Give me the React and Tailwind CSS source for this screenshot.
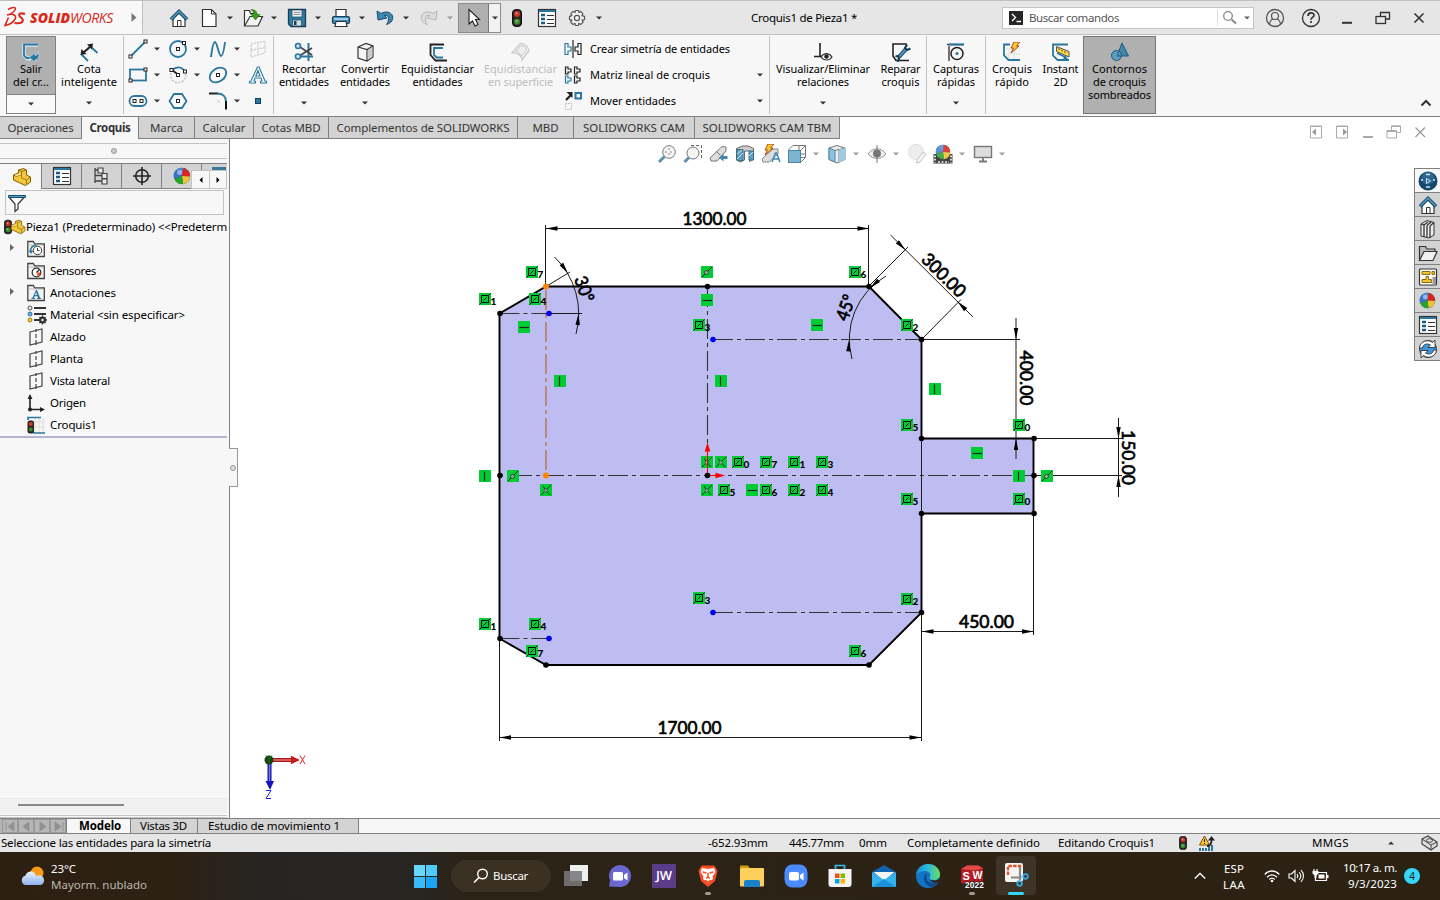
import { useLayoutEffect, useRef } from "react";

const FONT = "font-['Noto_Sans','Open_Sans',sans-serif]";

/* Text set to a given width by spreading its letters. */
function Fit({ w, className = "", children }) {
  const ref = useRef(null);
  useLayoutEffect(() => {
    const el = ref.current;
    el.style.letterSpacing = "0px";
    const n = el.textContent.length;
    el.style.letterSpacing = (w - el.getBoundingClientRect().width) / n + "px";
  }, [w]);
  return (
    <span ref={ref} className={"inline-block whitespace-nowrap " + className}>
      {children}
    </span>
  );
}

function Svg({ w = 20, h = 20, className = "", children }) {
  return (
    <svg width={w} height={h} viewBox={`0 0 ${w} ${h}`} fill="none" className={"block shrink-0 " + className}>
      {children}
    </svg>
  );
}

const Caret = ({ c = "#333", className = "" }) => (
  <Svg w={6} h={4} className={className}>
    <path d="M0 .5h6L3 3.500z" fill={c} />
  </Svg>
);

const B = "#2b77a0";
const D = "#333";

/* ---------- shared icons ---------- */
const Home = () => (
  <Svg>
    <path d="M4 10v8.500h12V10L10 4z" fill="#fff" stroke={D} strokeWidth="1.200" />
    <path d="M8.500 18.500v-6h3.500v6" stroke={D} />
    <path d="M2 11.500L10 3.500l8 8" stroke="#163f58" strokeWidth="3.600" />
    <path d="M2 11.300L10 3.300l8 8" stroke="#4795bd" strokeWidth="1.700" />
  </Svg>
);
const Ball = ({ s = 18 }) => (
  <svg width={s} height={s} viewBox="0 0 18 18" className="block shrink-0">
    <circle cx="9" cy="9" r="8.200" fill="#444" />
    <path d="M9 9L3 3A8 8 0 0 1 11 1.200z" fill="#4b86d8" />
    <path d="M9 9L3 3A8 8 0 0 0 1.500 12z" fill="#3674c9" />
    <path d="M9 9l1-7.800A8 8 0 0 1 17 9.500z" fill="#dc2420" />
    <path d="M9 9l8 .5A8 8 0 0 1 10 17z" fill="#f0c334" />
    <path d="M9 9l1 8A8 8 0 0 1 1.500 12z" fill="#23a52b" />
    <circle cx="6.500" cy="5.500" r="2.500" fill="#fff" opacity=".45" />
  </svg>
);
const Traffic = ({ w = 10, h = 18 }) => (
  <svg width={w} height={h} viewBox="0 0 10 18" className="block shrink-0">
    <rect x=".5" y=".5" width="9" height="17" rx="3.500" fill="#2c2525" stroke="#111" />
    <circle cx="5" cy="5" r="3" fill="#c93a26" />
    <circle cx="4.500" cy="4.300" r="1" fill="#f2937f" />
    <circle cx="5" cy="12.700" r="3" fill="#3f8d2b" />
    <circle cx="4.500" cy="12" r="1" fill="#8ed07c" />
  </svg>
);
const ListIcon = () => (
  <Svg>
    <rect x="1.500" y="1.500" width="17" height="17" fill="#fff" stroke={D} strokeWidth="1.200" />
    <path d="M2 3h16" stroke={B} strokeWidth="2" />
    <path d="M4 7h4M4 11h4M4 15h4" stroke="#1c5b80" strokeWidth="2.600" />
    <path d="M10 7.500h7M10 11.500h7M10 15.500h7" stroke={D} strokeWidth="1" />
  </Svg>
);
const Folder = () => (
  <Svg>
    <path d="M1.500 17.500V3.500h6l1.500 2.500h8v3" fill="#bbb" stroke={D} strokeWidth="1.200" />
    <path d="M1.500 17.500L6 8.500h13l-4 9z" fill="#f1f1f1" stroke={D} strokeWidth="1.200" />
  </Svg>
);
const Bolt = ({ t }) => <path transform={t} d="M4 0h6L6.500 4H9L1 11l2.500-5H1z" fill="#ffc92e" stroke="#a8491d" />;

/* ---------- title bar ---------- */
const NewDoc = () => (
  <Svg>
    <path d="M3.500 1.500h9l4.500 4.500v12.500H3.500z" fill="#fff" stroke={D} strokeWidth="1.200" />
    <path d="M12.500 1.500V6H17" stroke={D} />
  </Svg>
);
const OpenDoc = () => (
  <Svg w={22}>
    <path d="M2.500 18V2.500h5l1 3h6V9" fill="#fff" stroke={D} strokeWidth="1.200" />
    <path d="M2.500 18L8 8.500h12.500L16 18z" fill="#f4f4f4" stroke={D} strokeWidth="1.200" />
    <path d="M9 1.500c4 0 6 2 6 5h3L13.500 12 9 6.500h3c0-2-1-3.500-3-5z" fill="#3d9e1c" stroke="#1e6b09" strokeWidth=".6" />
  </Svg>
);
const Save = () => (
  <Svg>
    <path d="M1.500 1.500h17v17H4l-2.500-2.500z" fill="#2f7ca6" stroke="#173f58" strokeWidth="1.300" />
    <rect x="5" y="2" width="10" height="7" fill="#f3f3f3" stroke="#173f58" strokeWidth=".7" />
    <path d="M6.500 4.500h7M6.500 6.500h7" stroke="#777" strokeWidth=".8" />
    <rect x="5.500" y="12" width="9" height="6" fill="#ddd" stroke="#173f58" strokeWidth=".7" />
    <path d="M7 13h2.500v4H7z" fill="#173f58" />
  </Svg>
);
const Print = () => (
  <Svg>
    <path d="M5 10V1.500h10V10" fill="#fff" stroke={D} strokeWidth="1.200" />
    <rect x="1.500" y="8.500" width="17" height="7" rx="1.500" fill="#3c8cb6" stroke="#173f58" strokeWidth="1.200" />
    <path d="M3 11h14" stroke="#bfe2f3" strokeWidth="1.500" />
    <path d="M5 13.500h10l1 5H4z" fill="#fff" stroke={D} strokeWidth="1.200" />
  </Svg>
);
const Undo = ({ c = "#3d88b0", o = "#1b4b68", flip }) => (
  <Svg className={flip ? "-scale-x-100" : ""}>
    <path d="M2 3l1 9 9-2-3-2.500c3-.8 5 1 4.500 4.500-.2 1.800-1 3-2 4.500 5-1.500 7-5 6-8.500C16 3.500 10 3 6 5.500z" fill={c} stroke={o} />
  </Svg>
);
const Cursor = () => (
  <Svg>
    <path d="M5 1.500v14.500l3.500-3 2.500 5 3-1.500-2.500-5h4z" fill="#fff" stroke="#222" strokeWidth="1.100" />
  </Svg>
);
const Gear = () => (
  <Svg w={18} h={18}>
    <path d="M7.400 1.500h3.200l.4 2.100 1.600-1.200L15 4.800l-1.200 1.900 2.700.7v3.200l-2.500.5 1.200 2-2.400 2.300-2-1.200-.5 2.300H7.400L7 14.300l-2 1.200-2.300-2.400 1.200-2-2.400-.5V7.400l2.500-.7L2.800 4.800l2.300-2.400L7 3.600z" fill="#f2f2f2" stroke="#555" strokeWidth="1.200" strokeLinejoin="round" />
    <circle cx="9" cy="9" r="2.600" stroke="#555" strokeWidth="1.200" />
  </Svg>
);

function Tool({ children, c }) {
  return (
    <div className="flex w-11 items-center">
      <div className="flex w-[26px] justify-center">{children}</div>
      <Caret c={c} className="ml-[5px]" />
    </div>
  );
}

function TitleBar() {
  return (
    <header className="flex h-[35px] w-full shrink-0 items-center border-b border-t-[1.5px] border-[#c0c0c0] bg-[#e6e6e6]">
      <div className="flex h-full w-[143px] items-center border-r border-[#c0c0c0] bg-[#f8f8f8]">
        <Svg w={22} h={24} className="ml-1">
          <path d="M4 3.500C8 1 13 .500 11 4 10 6 7.500 7.500 5.500 8.500" stroke="#da291c" strokeWidth="1.500" />
          <path d="M3 9c7-2 10.500 1 7.500 5-2 3-5.500 4.800-9.500 5.500L4.500 11.500" stroke="#da291c" strokeWidth="1.600" />
          <path d="M21 8c-3.500-1.300-7-.5-5.500 2 1 1.500 4.500 3 3 5.500-1.300 2.200-4.500 2-8 1.500" stroke="#da291c" strokeWidth="2.100" />
        </Svg>
        <div className="ml-1 flex font-['Open_Sans','Noto_Sans',sans-serif] text-[14px] italic leading-[18px] text-[#da291c]">
          <Fit w={40} className="font-extrabold">SOLID</Fit>
          <Fit w={43}>WORKS</Fit>
        </div>
        <Svg w={6} h={10} className="ml-[18px]">
          <path d="M.5 0v9L5.500 4.500z" fill="#777" />
        </Svg>
      </div>
      <div className="ml-6 flex w-[29px] items-center"><div className="ml-[2px]"><Home /></div></div>
      <Tool><NewDoc /></Tool>
      <Tool><OpenDoc /></Tool>
      <Tool><Save /></Tool>
      <Tool><Print /></Tool>
      <Tool><Undo /></Tool>
      <Tool c="#999"><Undo flip c="#ddd" o="#b5b5b5" /></Tool>
      <div className="-ml-[2px] flex h-[30px] w-[43px] border border-[#8c8c8c] bg-[#f2f2f2]">
        <div className="flex w-[30px] items-center justify-center border-r border-[#777] bg-[#b0b0b0]"><Cursor /></div>
        <div className="flex flex-1 items-center justify-center"><Caret /></div>
      </div>
      <div className="ml-[11px]"><Traffic /></div>
      <div className="ml-[15px]"><ListIcon /></div>
      <div className="ml-[11px]"><Gear /></div>
      <Caret className="ml-[10px]" />
      <div className="ml-[149px] w-[251px] text-[11.500px]"><Fit w={106}>Croquis1 de Pieza1 *</Fit></div>
      <div className="flex h-[22px] w-[252px] items-center border border-[#c4c4c4] bg-white">
        <Svg w={14} h={14} className="ml-[6px]">
          <rect width="14" height="14" fill="#262626" />
          <path d="M3 3l3.500 3.500L3 10M7.500 10.500H12" stroke="#fff" strokeWidth="1.400" />
        </Svg>
        <span className="ml-[6px] w-[189px] border-r border-[#e0e0e0] text-[11.500px] text-[#555]"><Fit w={90}>Buscar comandos</Fit></span>
        <Svg w={15} h={15} className="ml-1">
          <circle cx="6" cy="6" r="4.300" stroke="#888" strokeWidth="1.300" />
          <path d="M9.500 9.500l4.500 4" stroke="#888" strokeWidth="2" />
        </Svg>
        <Caret c="#666" className="ml-[7px]" />
      </div>
      <Svg className="ml-[11px]">
        <circle cx="10" cy="10" r="8.500" stroke="#555" strokeWidth="1.300" />
        <circle cx="10" cy="8" r="3.500" stroke="#555" strokeWidth="1.200" />
        <path d="M4.500 16c.5-3 2-4.500 3.500-5M15.500 16c-.5-3-2-4.500-3.500-5" stroke="#555" strokeWidth="1.200" />
      </Svg>
      <Svg className="ml-4">
        <circle cx="10" cy="10" r="8.500" stroke="#333" strokeWidth="1.300" />
        <path d="M7 8c0-4 6-4 6-.8 0 2.200-3 2.200-3 4.500M10 13v2" stroke="#333" strokeWidth="1.700" />
      </Svg>
      <Svg w={12} h={14} className="ml-5"><path d="M1 11.800h10" stroke="#333" strokeWidth="2" /></Svg>
      <Svg w={16} h={14} className="ml-[22px]">
        <path d="M5.500 5V1.500h9V8H10.500M5.500 1.500h9" stroke="#333" strokeWidth="1.300" />
        <rect x="1" y="5.500" width="9.500" height="7" stroke="#333" strokeWidth="1.300" />
      </Svg>
      <Svg w={12} h={12} className="ml-[22px]"><path d="M1.500 1.500l9 9M10.500 1.500l-9 9" stroke="#333" strokeWidth="1.600" /></Svg>
    </header>
  );
}

/* ---------- ribbon ---------- */
const Nd = ({ x, y }) => <rect x={x - 1.500} y={y - 1.500} width="3" height="3" fill="#fff" stroke="#222" />;

const ExitSketch = () => (
  <Svg>
    <path d="M17 3H3v10l3 3.500h4" stroke="#d8ecf5" strokeWidth="3.500" />
    <path d="M17 2.500H3v11l2.500 2.500H9" stroke={B} strokeWidth="1.800" />
    <path d="M8 15.500l6-4.500v2.500c2 0 3-1.500 3-4 2 4.500 0 8.500-3 8.500V20z" fill={B} stroke="#d8ecf5" strokeWidth=".5" />
  </Svg>
);
const SmartDim = () => (
  <Svg>
    <path d="M2 12l7 7M11 4l7.500 7" stroke={B} strokeWidth="1.800" />
    <path d="M4 11L12 4" stroke="#222" strokeWidth="2.200" />
    <path d="M1.500 13l1-6 5 5zM14 1.500l-6 1 5 5z" fill="#222" />
  </Svg>
);
const Line = () => (
  <Svg><path d="M2 18L18 2" stroke={B} strokeWidth="1.800" /><Nd x={2.500} y={17.500} /><Nd x={17.500} y={2.500} /></Svg>
);
const Circle = () => (
  <Svg><circle cx="10" cy="10" r="8" stroke={B} strokeWidth="1.800" /><Nd x={10} y={10} /><Nd x={16} y={4} /></Svg>
);
const Spline = () => (
  <Svg><path d="M3 18C4 10 5 3 7 3s4 14 6 14 3-6 4-14" stroke={B} strokeWidth="1.900" /></Svg>
);
const Planes = () => (
  <Svg><path d="M3 5l14-3v12L3 18zM10 3.500v13M3 11.500l14-3" stroke="#c2c2c2" strokeDasharray="2 1" /></Svg>
);
const Rect = () => (
  <Svg><rect x="2" y="4.500" width="16" height="11" stroke={B} strokeWidth="1.800" /><Nd x={2.500} y={15.500} /><Nd x={17.500} y={4.500} /></Svg>
);
const Arc = () => (
  <Svg>
    <path d="M3 8a7.500 7.500 0 1 0 14-1" stroke="#c4c4c4" strokeWidth="1.600" strokeDasharray="2 1.500" />
    <path d="M5 4.500c4-3 8-2.500 11 .5" stroke={B} strokeWidth="1.800" />
    <path d="M4 5l6 4.500" stroke="#222" strokeWidth="1.800" />
    <Nd x={3.500} y={5} /><Nd x={10} y={10} /><Nd x={17} y={6.500} />
  </Svg>
);
const Ellipse = () => (
  <Svg><ellipse cx="10" cy="10" rx="9" ry="6.500" transform="rotate(-35 10 10)" stroke={B} strokeWidth="1.800" /><Nd x={10} y={10} /></Svg>
);
const TextA = () => (
  <Svg><path d="M1.500 18v-1.500l1.500-.5L9.500 2h1.500l6 14 1.500.5V18h-6v-1.500l1.500-.5-1-3H7l-1 3 1.500.5V18zM7.800 11h4.200l-2-5.500z" fill="#fff" stroke={B} strokeWidth="1.100" /></Svg>
);
const Slot = () => (
  <Svg><rect x="1.500" y="5" width="17" height="10" rx="5" stroke={B} strokeWidth="1.800" /><Nd x={6.500} y={10} /><Nd x={13.500} y={10} /></Svg>
);
const Hex = () => (
  <Svg><path d="M6 3h8l4.500 7L14 17H6l-4.500-7z" stroke={B} strokeWidth="1.800" /><Nd x={10} y={10} /></Svg>
);
const Fillet = () => (
  <Svg>
    <path d="M1 2.500h9" stroke="#222" strokeWidth="2" />
    <path d="M9 2.500c6 0 9 3 9 8" stroke={B} strokeWidth="1.800" />
    <path d="M18 10v8.500" stroke="#111" strokeWidth="2" />
    <path d="M9 9l3 3M12 9l-3 3" stroke="#ccc" />
  </Svg>
);
const Point = () => (
  <Svg><rect x="7.500" y="7.500" width="5" height="5" fill={B} stroke="#173f58" /></Svg>
);
const Trim = () => (
  <Svg>
    <path d="M14.500 1v18M2 14.500h17" stroke={B} strokeWidth="2" />
    <path d="M6 5l12 8M6 13.500L18 6" stroke="#444" strokeWidth="1.600" />
    <circle cx="4" cy="4" r="2.500" fill="#cde4f0" stroke={B} strokeWidth="1.600" />
    <circle cx="4" cy="14.500" r="2.500" fill="#cde4f0" stroke={B} strokeWidth="1.600" />
  </Svg>
);
const Cube = () => (
  <Svg>
    <path d="M3 5l8-3.500L18 4v11l-6 4-9-3z" fill="#f5f5f5" stroke={D} strokeWidth="1.200" />
    <path d="M3 5l9 2.500L18 4M12 7.500V19" stroke={D} strokeWidth="1.200" />
    <path d="M12.800 8L17.300 5v9.700l-4.500 3z" fill="#ccc" />
  </Svg>
);
const Offset = () => (
  <Svg>
    <path d="M16 2.500H2.500V13l5 5.500H19" stroke="#222" strokeWidth="1.800" />
    <path d="M15 6H6v7l2.500 2.500H15" stroke={B} strokeWidth="1.800" />
  </Svg>
);
const OffsetSurf = () => (
  <Svg>
    <path d="M1 11L9 1.500c4-.5 8 3 9 7L11 18c0-4-5-8-10-7z" fill="#eee" stroke="#ccc" strokeWidth="1.300" />
    <path d="M5 9l5-5.500c2.500 0 5 2.500 5.500 5L10 14c-.5-2-2.500-4.500-5-5z" stroke="#c8c8c8" />
  </Svg>
);
const Mirror = () => (
  <Svg w={18}>
    <path d="M1 4.500h3v3.500h3v4H4v3.500H1z" stroke={B} strokeWidth="1.200" />
    <path d="M9 1v18" stroke="#222" strokeWidth="1.200" />
    <path d="M17 4.500h-3v3.500h-3v4h3v3.500h3z" stroke="#222" strokeWidth="1.200" />
  </Svg>
);
const Pattern = () => {
  const p = "h2.500v2h3v3h-3v2H";
  return (
    <Svg w={18}>
      <path d={`M1.500 2${p}1.500zM10.500 2${p}10.500zM10.500 11${p}10.500z`} stroke="#222" strokeWidth="1.200" />
      <path d={`M1.500 11${p}1.500z`} stroke={B} strokeWidth="1.200" />
    </Svg>
  );
};
const Move = () => (
  <Svg w={18}>
    <path d="M2 9L7 4" stroke="#222" strokeWidth="2.300" /><path d="M8.500 1v6l-6-6z" fill="#222" />
    <rect x="11.500" y="2" width="5.500" height="5.500" stroke={B} strokeWidth="2" />
    <path d="M1.500 12.500h6v6h-6z" stroke="#bbb" strokeDasharray="1.500 1" />
  </Svg>
);
const Relations = () => (
  <Svg>
    <path d="M7 1v13M1 14.500h10" stroke="#222" strokeWidth="1.600" />
    <path d="M8 15c3-4.500 8-4.500 11 0-3 4-8 4-11 0z" fill="#fff" stroke="#333" strokeWidth="1.200" /><circle cx="13.500" cy="14.500" r="2.200" fill="#222" />
  </Svg>
);
const Repair = () => (
  <Svg>
    <path d="M16 2H2v12l3 4.500h13" stroke="#222" strokeWidth="1.600" />
    <path d="M8 15l7-8" stroke="#163f58" strokeWidth="4" /><path d="M8 15l7-8" stroke="#4b97bd" strokeWidth="2" />
    <path d="M16 2.500l-2 3.500 2 2 3.500-1.500M4.500 14l3 .5.500 3-2 2" stroke="#163f58" strokeWidth="2.200" />
  </Svg>
);
const Snap = () => (
  <Svg>
    <path d="M3 19V4M1 2.500h17" stroke="#444" strokeWidth="1.500" /><path d="M3 2.500h15" stroke={B} strokeWidth="2" />
    <circle cx="11" cy="11.500" r="6" stroke="#222" strokeWidth="1.500" /><circle cx="11" cy="11.500" r="1.600" fill={B} />
  </Svg>
);
const Quick = () => (
  <Svg>
    <path d="M7 7v11M12 7v11M4 12h14M4 7h14" stroke="#ddd" />
    <path d="M8 2.500H2v11L6.500 18H18" stroke={B} strokeWidth="1.800" />
    <Bolt t="translate(8 0)" />
  </Svg>
);
const Instant2D = () => (
  <Svg>
    <path d="M17 2.500H2v11L6.500 18H18" stroke={B} strokeWidth="1.800" />
    <path d="M5.500 4.500L18 9.500v5.500L5.500 9.500z" fill="#ffd93b" stroke="#555" /><path d="M8 6v2M11 7.500v2M14 9v2" stroke="#555" />
    <path d="M6 11l9 4.500" stroke={B} strokeWidth="1.600" /><path d="M17 17l-5 .3 2-4z" fill={B} />
  </Svg>
);
const Shaded = () => (
  <Svg>
    <path d="M12 1l6.500 13H7z" fill="#4388ab" stroke="#1d5876" />
    <circle cx="6.500" cy="13.500" r="5" fill="#5b9dbe" stroke="#1d5876" /><path d="M7 14h4.500M8 10v4" stroke="#1d5876" />
  </Svg>
);

function Big({ className, icon, lines, dis, arrow }) {
  return (
    <div className={"flex h-[78px] shrink-0 flex-col items-center pt-[6px] " + className}>
      {icon}
      <div className={"text-center text-[11px] leading-[13px] " + (dis ? "text-[#bdbdbd]" : "text-black")}>
        {lines.map(([t, w]) => (
          <div key={t} className="flex h-[13px] justify-center"><Fit w={w}>{t}</Fit></div>
        ))}
      </div>
      {arrow && <Caret className="mb-[9px] mt-auto" />}
    </div>
  );
}
const Sep = () => <div className="h-[78px] w-px shrink-0 bg-[#c4c4c4]" />;

const TOOLS = [
  [Line, 1], [Circle, 1], [Spline, 1], [Planes, 0],
  [Rect, 1], [Arc, 1], [Ellipse, 1], [TextA, 0],
  [Slot, 1], [Hex, 0], [Fillet, 1], [Point, 0],
];

function Ribbon() {
  return (
    <section className="flex h-[82px] w-full shrink-0 border-b border-[#808080] bg-[#f7f7f7] pt-px">
      <div className="ml-[6px] flex h-[78px] w-[50px] flex-col border border-[#808080] bg-[#f9f9f9]">
        <div className="flex h-[58px] flex-col items-center border-b border-[#808080] bg-[#b0b0b0] pt-[5px] text-[11px] leading-[13px]">
          <ExitSketch />
          <Fit w={22}>Salir</Fit>
          <Fit w={36}>del cr...</Fit>
        </div>
        <div className="flex flex-1 items-center justify-center"><Caret /></div>
      </div>
      <Big className="w-[66px]" icon={<SmartDim />} lines={[["Cota", 24], ["inteligente", 56]]} arrow />
      <div className="w-px" />
      <Sep />
      <div className="ml-1 grid h-[78px] w-[145px] grid-cols-[40px_40px_40px_25px] grid-rows-[26px_26px_26px]">
        {TOOLS.map(([I, a], i) => (
          <div key={i} className="flex items-center"><I />{a ? <Caret className="ml-[6px]" /> : null}</div>
        ))}
      </div>
      <Sep />
      <Big className="w-[60px]" icon={<Trim />} lines={[["Recortar", 44], ["entidades", 50]]} arrow />
      <Big className="w-[62px]" icon={<Cube />} lines={[["Convertir", 48], ["entidades", 50]]} arrow />
      <Big className="w-[83px]" icon={<Offset />} lines={[["Equidistanciar", 73], ["entidades", 50]]} />
      <Big className="w-[83px]" icon={<OffsetSurf />} lines={[["Equidistanciar", 73], ["en superficie", 65]]} dis />
      <div className="ml-[2px] grid h-[78px] w-[205px] grid-rows-[26px_26px_26px] text-[11px]">
        <div className="flex items-center"><Mirror /><Fit w={140} className="ml-2">Crear simetría de entidades</Fit></div>
        <div className="flex items-center"><Pattern /><Fit w={120} className="ml-2">Matriz lineal de croquis</Fit><Caret className="ml-auto mr-[6px]" /></div>
        <div className="flex items-center"><Move /><Fit w={86} className="ml-2">Mover entidades</Fit><Caret className="ml-auto mr-[6px]" /></div>
      </div>
      <Sep />
      <Big className="w-[106px]" icon={<Relations />} lines={[["Visualizar/Eliminar", 94], ["relaciones", 52]]} arrow />
      <Big className="w-[49px]" icon={<Repair />} lines={[["Reparar", 40], ["croquis", 38]]} />
      <div className="w-px" />
      <Sep />
      <Big className="w-[58px]" icon={<Snap />} lines={[["Capturas", 46], ["rápidas", 38]]} arrow />
      <Sep />
      <Big className="w-[52px]" icon={<Quick />} lines={[["Croquis", 40], ["rápido", 34]]} />
      <Big className="w-[45px]" icon={<Instant2D />} lines={[["Instant", 36], ["2D", 14]]} />
      <Big className="w-[73px] border border-[#777] bg-[#b0b0b0] !pt-[5px]" icon={<Shaded />} lines={[["Contornos", 55], ["de croquis", 53], ["sombreados", 63]]} />
      <div className="flex flex-1 items-end justify-end">
        <Svg w={12} h={8} className="mb-[9px] mr-2"><path d="M1.500 6.500L6 2l4.500 4.500" stroke="#333" strokeWidth="2" /></Svg>
      </div>
    </section>
  );
}

/* ---------- command tabs ---------- */
const TABS = [
  ["Operaciones", "w-[82px]", 66], ["Croquis", "w-[57px]", 41], ["Marca", "w-[56px]", 33], ["Calcular", "w-[59px]", 43],
  ["Cotas MBD", "w-[75px]", 59], ["Complementos de SOLIDWORKS", "w-[189px]", 173], ["MBD", "w-[56px]", 26],
  ["SOLIDWORKS CAM", "w-[121px]", 102], ["SOLIDWORKS CAM TBM", "w-[145px]", 129],
];
const WinBtn = ({ children }) => <div className="flex w-[26px] justify-center">{children}</div>;
function CommandTabs() {
  return (
    <nav className="flex h-[22px] w-full shrink-0 bg-white text-[11.500px] text-[#333]">
      {TABS.map(([t, c, w]) => (
        <div key={t} className={"flex shrink-0 items-center justify-center border-r border-[#808080] " + c + (t === "Croquis" ? " bg-[#f7f7f7] font-bold" : " border-b bg-[#d3d3d3]")}>
          <Fit w={w}>{t}</Fit>
        </div>
      ))}
      <div className="flex flex-1 items-center justify-end pr-[7px] pt-2">
        <WinBtn><Svg w={12} h={14}><path d="M.5 1h11v12H.5zM.5 1.500h11" stroke="#aaa" /><path d="M6 3.500v7L2 7z" fill="#999" /></Svg></WinBtn>
        <WinBtn><Svg w={12} h={14}><path d="M.5 1h11v12H.5zM.5 1.500h11" stroke="#aaa" /><path d="M7 3.500v7L11 7z" fill="#999" /></Svg></WinBtn>
        <WinBtn><Svg w={10} h={14}><path d="M0 12h10" stroke="#aaa" strokeWidth="2" /></Svg></WinBtn>
        <WinBtn><Svg w={16} h={14}><path d="M5.500 5V.8h9V7.500h-4M5.500 1.500h9M1 5.500h9.500v7.500H1zM1 6.500h9" stroke="#aaa" /></Svg></WinBtn>
        <WinBtn><Svg w={11} h={11}><path d="M.5.5l9.500 9.500M10 .5L.5 10" stroke="#999" strokeWidth="1.200" /></Svg></WinBtn>
      </div>
    </nav>
  );
}

/* ---------- feature tree ---------- */
const Part = ({ s = 20 }) => (
  <svg width={s} height={s} viewBox="1 0 19 20" fill="none" className="block shrink-0">
    <path d="M2 8l5-2V3l5-1.500 3 1.500v5l4 2v5l-5 3.500L2 13z" fill="#f4c838" stroke="#7d5d0d" />
    <path d="M2 8l3 1.500 5-2M7 3l3 1.500 5-1.500M10 4.500V11l5 2 4-3M15 13v5" stroke="#9b7615" />
    <path d="M3 8l5-1.500 2 1-5 1.500z" fill="#ffe894" />
  </svg>
);
const Config = () => (
  <Svg><path d="M3 2v15M3 4h4M3 15h7M3 9.500h7" stroke="#444" strokeWidth="1.300" /><path d="M6 2h5v5H6zM10 7.500h5v5h-5zM10 13h5v5h-5z" fill="#e8e8e8" stroke="#444" strokeWidth="1.200" /></Svg>
);
const Target = () => (
  <Svg><circle cx="10" cy="10" r="6.300" stroke="#222" strokeWidth="1.600" /><path d="M10 1v18M1 10h18" stroke="#222" strokeWidth="1.600" /></Svg>
);
const FolderBase = ({ children }) => (
  <Svg w={18} h={18}>
    <path d="M.8 16.500V1.500h5.500l1.500 2.500h9.500v12.500z" fill="#f3f3f3" stroke="#444" strokeWidth="1.300" />
    <path d="M1.500 5h15" stroke="#bbb" />
    {children}
  </Svg>
);
const Historial = () => (
  <FolderBase><circle cx="10.500" cy="10.500" r="4.200" fill="#fff" stroke="#444" /><path d="M10.500 8v2.500h2" stroke="#333" /><path d="M3.500 11c0-4 3-5.500 6-5.500" stroke={B} strokeWidth="1.700" /><path d="M1.500 10.500h5L4 14z" fill={B} /></FolderBase>
);
const Sensor = () => (
  <FolderBase><circle cx="9.500" cy="10.500" r="4.300" fill="#fff" stroke="#333" strokeWidth="1.300" /><path d="M9.500 10.500l3-3" stroke="#222" strokeWidth="1.300" /><path d="M9.500 10.500h4a4 4 0 0 1-2.500 4z" fill="#e5502c" /></FolderBase>
);
const Annot = () => (
  <FolderBase><path d="M4.500 15v-1l1-.3L9 6h1l3 7.700 1 .3v1h-4v-1l1-.3-.5-1.500H7.500L7 13.700l1 .3v1z" fill={B} /><path d="M8 11h2l-1-2.500z" fill="#fff" /></FolderBase>
);
const Material = () => (
  <Svg>
    <path d="M7 3h12M7 9h12M7 15h6" stroke="#333" strokeWidth="1.800" />
    <circle cx="3" cy="3" r="2" fill="#eee" stroke="#555" /><circle cx="3" cy="9" r="2" fill="#6cb5dc" stroke={B} /><circle cx="3" cy="15" r="2" fill="#f8c93a" stroke="#a77d10" />
    <circle cx="15.500" cy="15" r="3.500" fill="#333" /><path d="M15.500 10.500v9M11 15h9M12.500 12l6 6M18.500 12l-6 6" stroke="#333" strokeWidth="1.300" /><circle cx="15.500" cy="15" r="1.200" fill="#f7f7f7" />
  </Svg>
);
const Plane = () => (
  <Svg w={18} h={18}><path d="M3 4l12-3v13L3 17zM9 1v3M9 6v4M9 12v5" stroke="#444" strokeWidth="1.200" /></Svg>
);
const Origin = () => (
  <Svg w={18} h={18}><path d="M3 3v12.500h12" stroke="#222" strokeWidth="1.600" /><path d="M3 0l2.500 5h-5zM18 15.500l-5 2.500v-5z" fill="#222" /><circle cx="3" cy="15.500" r="2" fill="#222" /></Svg>
);
const SketchIcon = () => (
  <Svg w={18} h={18}><path d="M8 2v15M12 2v15M16 2v15M5 6h13M5 11h13" stroke="#ddd" /><path d="M1 4V1.500h13M6 17h12" stroke={B} strokeWidth="1.700" /><rect x=".5" y="4.500" width="6.500" height="13" rx="2.500" fill="#2b2424" /><circle cx="3.800" cy="8" r="2" fill="#cd3c2a" /><circle cx="3.800" cy="13.500" r="2" fill="#3c8c2b" /></Svg>
);
const TREE = [
  ["Historial", Historial, 44, 1], ["Sensores", Sensor, 46, 0], ["Anotaciones", Annot, 66, 1],
  ["Material <sin especificar>", Material, 135, 0], ["Alzado", Plane, 36, 0], ["Planta", Plane, 33, 0],
  ["Vista lateral", Plane, 60, 0], ["Origen", Origin, 36, 0], ["Croquis1", SketchIcon, 47, 0],
];
const PTAB = "flex h-full w-10 shrink-0 items-center justify-center border-r border-[#808080]";

function FeaturePanel() {
  return (
    <aside className="flex h-full w-[230px] shrink-0 flex-col border-r border-[#808080] bg-[#f7f7f7]">
      <div className="mt-1 flex h-4 w-[227px] items-center justify-center border-y border-[#c4c4c4]">
        <div className="h-[6px] w-[6px] rounded-full border border-[#999] bg-[#ccc]" />
      </div>
      <div className="mt-1 flex h-[26px] w-[227px] overflow-hidden border-t border-[#808080] pl-[2px]">
        <div className={PTAB + " bg-[#f7f7f7]"}><Part /></div>
        <div className={PTAB + " border-b bg-[#d3d3d3]"}><ListIcon /></div>
        <div className={PTAB + " border-b bg-[#d3d3d3]"}><Config /></div>
        <div className={PTAB + " border-b bg-[#d3d3d3]"}><Target /></div>
        <div className="flex h-full w-[29px] shrink-0 items-center overflow-hidden border-b border-[#808080] bg-[#d3d3d3] pl-[11px]"><Ball /></div>
        <div className="flex w-9 shrink-0 flex-col">
          <div className="flex h-[6px] bg-[#d3d3d3] pt-[3px]"><div className="-mt-[3px] ml-[10px] h-[6px] w-px bg-[#808080]" /><div className="ml-[10px] h-[3px] w-[14px] bg-[#3c7797]" /></div>
          <div className="flex flex-1 border border-[#c4c4c4] bg-[#f7f7f7]">
            <div className="flex w-[18px] items-center justify-center border-r border-[#c4c4c4]"><Svg w={4} h={6}><path d="M3.500 0v6L.5 3z" fill="#000" /></Svg></div>
            <div className="flex flex-1 items-center justify-center"><Svg w={4} h={6}><path d="M.5 0v6l3-3z" fill="#000" /></Svg></div>
          </div>
        </div>
      </div>
      <div className="ml-[5px] mt-px flex h-[25px] w-[219px] shrink-0 items-center border border-[#c4c4c4]">
        <Svg className="ml-[1px]"><path d="M2 4l6 7v7.500l3-2.500v-5l6.500-7" fill="#fff" stroke={D} strokeWidth="1.200" /><path d="M1.500 2.500h17v2h-17z" fill="#4ca5cf" stroke="#1b4b68" /></Svg>
      </div>
      <div className="mt-[1px] flex h-[22px] w-[227px] shrink-0 items-center overflow-hidden pl-1 text-[11.500px]">
        <Traffic w={8} h={16} /><div className="-ml-[2px] w-[17px]"><Part s={16} /></div>
        <Fit w={201}>{"Pieza1 (Predeterminado) <<Predeterm"}</Fit>
      </div>
      {TREE.map(([t, I, w, a]) => (
        <div key={t} className="flex h-[22px] shrink-0 items-center text-[11.500px]">
          <div className="w-[27px] pl-[10px]">{a ? <Svg w={5} h={8} className="-mt-[2px]"><path d="M0 0v7l4-3.500z" fill="#666" /></Svg> : null}</div>
          <div className="w-[23px]"><I /></div>
          <Fit w={w}>{t}</Fit>
        </div>
      ))}
      <div className="h-[2px] w-[227px] shrink-0 bg-[#b4b4cf]" />
      <div className="mt-auto flex h-[17px] w-[227px] items-center border-t border-white bg-[#f0f0f0]"><div className="ml-[18px] h-[2px] w-[106px] bg-[#888]" /></div>
      <div className="mt-[2px] h-[3px] w-[227px] border-y border-[#c4c4c4]" />
    </aside>
  );
}

/* ---------- sketch ---------- */
const REL = [
  [532, 272, 7], [485, 299, 1], [535, 299, 4], [855, 272, 6], [907, 325, 2], [699, 325, 3], [907, 425, 5], [1019, 425, 0],
  [738, 462, 0], [766, 462, 7], [794, 462, 1], [822, 462, 3], [724, 490, 5], [766, 490, 6], [794, 490, 2], [822, 490, 4],
  [907, 499, 5], [1019, 499, 0], [907, 599, 2], [699, 598, 3], [485, 624, 1], [535, 624, 4], [532, 651, 7], [855, 651, 6],
];
const HOR = [[707, 300], [524, 327], [817, 325], [752, 490], [977, 453]];
const VER = [[560, 381], [721, 381], [935, 389], [485, 476], [1019, 476]];
const MID = [[707, 272], [513, 476], [1047, 476]];
const COI = [[707, 462], [721, 462], [546, 490], [707, 490]];
const DOTS = [
  [500, 313.500], [707.500, 286.500], [869, 286.500], [921.500, 339.500], [500, 475.500], [707.500, 475.500], [921.500, 438.500],
  [1034, 438.500], [1034, 475.500], [921.500, 513.500], [1034, 513.500], [921.500, 612.500], [869, 665], [546, 665], [500, 638.500],
];
const BLUE = [[549, 313.500], [713, 339.500], [713, 612.500], [549, 638.500]];

const Badge = ({ x, y, children }) => (
  <g transform={`translate(${x - 6} ${y - 6})`}>
    <rect width="12" height="12" fill="#00cc33" />
    {children}
  </g>
);
/* Arrow head with its tip at x,y, pointing along a degrees. */
const Tip = ({ x, y, a }) => <path transform={`translate(${x} ${y}) rotate(${a})`} d="M0 0L-11.500 2.200V-2.200z" fill="#000" />;
const Dim = ({ x, y, a = 0, w, children }) => (
  <text transform={`translate(${x} ${y}) rotate(${a})`} y="6.500" textAnchor="middle" textLength={w} lengthAdjust="spacingAndGlyphs" fontSize="18" fill="#000" stroke="#000" strokeWidth=".7" className="font-['Lato',sans-serif]">
    {children}
  </text>
);

function Sketch() {
  return (
    <svg width="1210" height="648" viewBox="230 169 1210 648" fill="none" className="block">
      <path d="M546 286.500H869L921.500 339.500V438.500H1033.500V513.500H921.500V612.500L869 665H546L499.500 638.500V313.500z" fill="#bdbdf1" />
      <g stroke="#333" strokeWidth="1.100" strokeDasharray="20 4 4 4">
        <path d="M499.500 313.500H549M499.500 638.500H549M713 339.500H921M713 612.500H921M512 475.500H1033M707.500 287V475" />
        <path d="M546 290V475" stroke="#b9723d" strokeWidth="1.300" />
      </g>
      <g stroke="#1a1a1a" strokeWidth="1">
        <path d="M545.500 225V286M868.500 225V286M546 228.500H869" />
        <path d="M546 286.500L570 272M549 313.500H582" />
        <path d="M554.500 257A78.500 78.500 0 0 1 576 334" />
        <path d="M886 276A73 73 0 0 0 852 359" />
        <path d="M869 286L908 247M922 339L961 299.500M890.500 235L973 317" />
        <path d="M922 339.500H1020M1016 318V459M1034 438.500H1122M1034 475.500H1122M1118.500 418V497" />
        <path d="M1033.500 514V635M921.500 613V741M922 631.500H1033M499.500 639V741M499.500 737.500H921" />
        <path d="M921.500 438V513" />
      </g>
      <path d="M921.500 438.500V339.500L869 286.500H546L499.500 313.500V638.500L546 665H869L921.500 612.500V513.500H1033.500V438.500H921.500" stroke="#000" strokeWidth="1.900" />
      <Tip x={546} y={228.500} a={180} /><Tip x={869} y={228.500} a={0} />
      <Tip x={568} y={273.500} a={55} /><Tip x={578.500} y={313.500} a={-86} />
      <Tip x={870} y={288} a={138} /><Tip x={849} y={340} a={-87} />
      <Tip x={905.500} y={250} a={45} /><Tip x={957.500} y={301.500} a={225} />
      <Tip x={1016} y={339.500} a={90} /><Tip x={1016} y={438.500} a={-90} />
      <Tip x={1118.500} y={438.500} a={90} /><Tip x={1118.500} y={475.500} a={-90} />
      <Tip x={922} y={631.500} a={180} /><Tip x={1033.500} y={631.500} a={0} />
      <Tip x={499.500} y={737.500} a={180} /><Tip x={921} y={737.500} a={0} />
      <Dim x={714.500} y={218} w={64}>1300.00</Dim>
      <Dim x={689.500} y={727} w={64}>1700.00</Dim>
      <Dim x={986.500} y={621} w={55}>450.00</Dim>
      <Dim x={944} y={275} a={45} w={54}>300.00</Dim>
      <Dim x={1026} y={378} a={90} w={55}>400.00</Dim>
      <Dim x={1128} y={457.500} a={90} w={55}>150.00</Dim>
      <Dim x={584.500} y={289} a={71} w={26}>30º</Dim>
      <Dim x={845.500} y={307.500} a={-70} w={26}>45º</Dim>
      {DOTS.map(([x, y], i) => <circle key={i} cx={x} cy={y} r="2.800" fill="#000" />)}
      {BLUE.map(([x, y], i) => <circle key={i} cx={x} cy={y} r="2.800" fill="#0000f0" />)}
      <circle cx="546" cy="286.500" r="3" fill="#ff8400" />
      <circle cx="546" cy="475.500" r="3" fill="#ff8400" />
      {REL.map(([x, y, n], i) => (
        <g key={i}>
          <Badge x={x} y={y}>
            <path d="M2.500 2.500h7v7h-7zM4.500 7.500l3-3M10 2l1.500-1.500M.5 11.500L2 10" stroke="#000" strokeWidth="1" />
          </Badge>
          <text x={x + 5.500} y={y + 5.500} fontSize="10" fontWeight="900" fill="#000" className="font-['Lato',sans-serif]">{n}</text>
        </g>
      ))}
      {HOR.map(([x, y], i) => <Badge key={i} x={x} y={y}><path d="M1.500 6.500h9.500" stroke="#222" strokeWidth="1.200" /></Badge>)}
      {VER.map(([x, y], i) => <Badge key={i} x={x} y={y}><path d="M5.500 1.500V11" stroke="#222" strokeWidth="1.200" /></Badge>)}
      {MID.map(([x, y], i) => <Badge key={i} x={x} y={y}><path d="M1 11L11 1" stroke="#222" /><circle cx="5.500" cy="6.500" r="2" fill="#7db88a" stroke="#444" /></Badge>)}
      {COI.map(([x, y], i) => <Badge key={i} x={x} y={y}><path d="M1 11L11 1M3 2l2.500 4L10 11" stroke="#333" /><circle cx="5.700" cy="6.500" r="1.600" fill="#8fc29a" stroke="#555" /></Badge>)}
      <path d="M707.500 473V450M710 475.500H717" stroke="#f00" strokeWidth="1" />
      <path d="M707.500 442.500l2.800 9h-5.600zM725 475.500l-9.500 2.800v-5.600z" fill="#f00" />
      <g>
        <path d="M269.500 764v18" stroke="#1010a0" strokeWidth="4" /><path d="M269.500 764v18" stroke="#7777f0" strokeWidth="1.500" />
        <path d="M265.500 781h8.500l-4 9z" fill="#1515c0" />
        <path d="M273 760h20" stroke="#a01818" strokeWidth="4" /><path d="M273 760h20" stroke="#f07070" strokeWidth="1.500" />
        <path d="M291 755.800v8.400l9-4.200z" fill="#c41a1a" />
        <circle cx="269" cy="760" r="4.500" fill="#174017" /><path d="M266 755.500l3 4 3-4M269 759.500v4" stroke="#0a7a0a" />
        <path d="M300 755.500l5 8.500M305 755.500l-5 8.500" stroke="#e82020" />
        <path d="M266 790.500h5l-5 8h5" stroke="#2020e8" />
      </g>
    </svg>
  );
}

const G = "#999";
function HeadsUp() {
  return (
    <div className="flex h-[30px] items-center pl-[427px]">
      <Svg><circle cx="12" cy="8" r="6.300" fill="#f5f5f5" stroke="#777" /><path d="M12 4v8M8 8h8" stroke="#888" strokeDasharray="2 3" /><path d="M7.500 12.500L2 18" stroke="#5a93b0" strokeWidth="3" /></Svg>
      <Svg className="ml-[6px]"><path d="M8 1.500h10.500v13" stroke="#666" strokeDasharray="3 2" /><circle cx="10" cy="9" r="6" fill="#f3f3f3" stroke="#777" /><path d="M6 13.500L1.500 18" stroke="#5a93b0" strokeWidth="3" /></Svg>
      <Svg className="ml-[6px]"><path d="M1 14L13 2.500l4 .5v4L8 17H2z" fill="#ddd" stroke="#777" /><path d="M7 7l4 4" stroke="#777" /><path d="M10 13.500l4.500-4v2.500h4v3h-4v2.500z" fill="#3e88b0" /></Svg>
      <Svg className="ml-[6px]"><path d="M1.500 4.500l6-2.500h6l5 2.500v11l-4 2V7h-5v9l-4 2-4-2z" fill="#ccc" stroke="#666" /><path d="M2 5.500h6v11H2zM14 7h4.500v9H14z" fill="#5b9fc3" stroke="#37708e" /><path d="M2 10l5-4M2 15l6-6M14 12l4-4" stroke="#cbe5f2" /></Svg>
      <Svg className="ml-[6px]"><path d="M1 15L12 5l5 0v5l-9 8H2z" fill="#ddd" stroke="#888" /><Bolt t="translate(3 0)" /><path d="M11 18l3.500-9h1l3.500 9M12.500 15h5" stroke="#3e88b0" strokeWidth="1.500" /></Svg>
      <Svg className="ml-[6px]"><path d="M6 1.500h12.500v12L14 18M6 1.500L1.500 6M18.500 1.500L14 6M12 1.500v12h6M2 10h16" stroke="#777" /><rect x="1.500" y="6.500" width="12" height="12" fill="#7cb4d1" stroke="#4b88a6" /></Svg>
      <Caret c={G} className="ml-[6px]" />
      <Svg className="ml-[8px]"><path d="M2 4l8-2.500L18 4v11.500L10 19l-8-3.500z" fill="#eee" stroke="#777" /><path d="M2 4l6 2.500V18l-6-2.500z" fill="#8cc4de" stroke="#4b88a6" /><path d="M8 6.500L18 4M12 6v12" stroke="#777" /><path d="M12 5.500L18 4v11.500l-6 3z" fill="#9ccce2" /></Svg>
      <Caret c={G} className="ml-[6px]" />
      <Svg className="ml-[8px]"><path d="M1 10c5-7 13-7 18 0-5 6-13 6-18 0z" fill="#eee" stroke="#999" /><circle cx="10" cy="9.500" r="4" fill="#777" /><path d="M10 1v18" stroke="#777" /></Svg>
      <Caret c={G} className="ml-[6px]" />
      <Svg className="ml-2 opacity-50"><circle cx="9" cy="8" r="7.500" fill="#ddd" stroke="#bbb" /><path d="M10 16l6-8 3 2-6 8-3.500 1z" fill="#eee" stroke="#888" /></Svg>
      <Svg className="ml-[6px]">
        <path d="M.5 10h19v9.500H.5z" fill="#444" /><path d="M2 11.500v7M18 11.500v7" stroke="#eee" strokeWidth="1.800" strokeDasharray="1.800 1.500" /><path d="M5 18h11" stroke="#eee" strokeWidth="1.500" strokeDasharray="2 1.500" />
        <g transform="translate(2 0) scale(.89)">
          <circle cx="9" cy="9" r="8.200" fill="#555" /><path d="M9 9L3 3A8 8 0 0 1 10 1z" fill="#6d9de0" /><path d="M9 9L3 3A8 8 0 0 0 1.500 11z" fill="#5b8fd8" /><path d="M9 9l1-7.800A8 8 0 0 1 17 9.500z" fill="#e0403a" /><path d="M9 9l8 .5A8 8 0 0 1 10 17z" fill="#f0c84a" /><path d="M9 9l1 8A8 8 0 0 1 1.500 11z" fill="#47b04c" />
        </g>
      </Svg>
      <Caret c={G} className="ml-[6px]" />
      <Svg className="ml-2"><rect x="1.500" y="2.500" width="17" height="11" fill="#ddd" stroke="#777" strokeWidth="1.400" /><path d="M10 14v3M6 17.500h8" stroke="#777" strokeWidth="1.800" /></Svg>
      <Caret c={G} className="ml-[6px]" />
    </div>
  );
}

const Cell = ({ children, active }) => (
  <div className={"flex h-6 items-center justify-center border-b border-[#808080] " + (active ? "bg-[#f7f7f7]" : "bg-[#d3d3d3]")}>{children}</div>
);

function TaskPane() {
  return (
    <div className="absolute right-0 top-[29px] w-[26px] border-l border-t border-[#808080]">
      <Cell active><Svg><circle cx="10" cy="10" r="9.500" fill="#17496b" /><circle cx="10" cy="7" r="6.500" fill="#3b7da5" opacity=".6" /><path d="M8.500 7.500v5L12.500 10z" stroke="#cde4f0" /><path d="M3 9h2M15 9h2M8 3.500h4M8 16h4" stroke="#cde4f0" strokeWidth="1.600" /></Svg></Cell>
      <Cell><Home /></Cell>
      <Cell><Svg><path d="M3 5l6-3.500 7 2V16l-5 3-8-2z" fill="#eee" stroke={D} /><path d="M3 5l3 1v12M6 6l4-3M9 6.500V18M12 7v12M9 6.500l4-3.500M12 7l4-3.500" stroke={D} strokeWidth="1.300" /></Svg></Cell>
      <Cell><Folder /></Cell>
      <Cell><Svg><rect x="1.500" y="2" width="17" height="16" rx="1" fill="#fff" stroke={D} strokeWidth="1.200" /><path d="M4 4.500h8v3H4zM14 4.500h2.500v3H14zM8 9.500h2.500v3h3v3H4v-3h4z" fill="#f6c42d" stroke="#8d6a0e" /><path d="M14.500 10h3.500v8h-3.500z" fill="#999" /></Svg></Cell>
      <Cell><Ball s={17} /></Cell>
      <Cell><ListIcon /></Cell>
      <Cell><Svg><circle cx="10" cy="10" r="8.500" fill="#3f93dc" stroke="#444" /><path d="M1.500 9C2 2 10 0 14.500 3.500L17 1v7.500h-7l2.500-2.500C9 4 5 5 4.500 9zM18.500 11C18 18 10 20 5.500 16.500L3 19v-7.500h7L7.500 14C11 16 15 15 15.500 11z" fill="#fff" stroke="#333" strokeWidth=".9" /></Svg></Cell>
    </div>
  );
}

function Workspace() {
  return (
    <main className="flex h-[679px] w-full shrink-0">
      <FeaturePanel />
      <div className="relative min-w-0 flex-1 bg-white">
        <HeadsUp />
        <Sketch />
        <TaskPane />
        <div className="absolute -left-px top-[309px] flex h-[39px] w-[9px] items-center justify-center border border-l-0 border-[#999] bg-[#f7f7f7]">
          <div className="h-[6px] w-[6px] rounded-full border border-[#999] bg-[#ddd]" />
        </div>
      </div>
    </main>
  );
}

/* ---------- model tabs and status ---------- */
const NAV = ["M3 1v9M11 1v9L5 5.500z", "M10 1v9L4 5.500z", "M5 1v9l6-4.500z", "M4 1v9l6-4.500zM12 1v9"];
function Footer() {
  return (
    <>
      <div className="flex h-[15px] w-full shrink-0 border-t border-[#808080] bg-[#f7f7f7] text-[11.500px] leading-[13px]">
        <div className="flex w-[67px] border-r border-[#808080] bg-[#b4b4b4] pl-[2px]">
          {NAV.map((d) => (
            <div key={d} className="flex w-4 items-center justify-center border border-[#999] bg-[#b6b6b6]"><Svg w={14} h={11}><path d={d} fill="#929292" stroke="#929292" /></Svg></div>
          ))}
        </div>
        <div className="w-[64px] border-r border-[#808080] pl-3 font-bold"><Fit w={42}>Modelo</Fit></div>
        <div className="w-[67px] border-r border-[#808080] bg-[#d3d3d3] pl-[9px]"><Fit w={47}>Vistas 3D</Fit></div>
        <div className="w-[161px] border-r border-[#808080] bg-[#d3d3d3] pl-[10px]"><Fit w={132}>Estudio de movimiento 1</Fit></div>
      </div>
      <div className="flex h-[19px] w-full shrink-0 items-center border-t border-[#808080] bg-[#e6e6e6] text-[11.500px] leading-[16px]">
        <div className="w-[708px] pl-px"><Fit w={210}>Seleccione las entidades para la simetría</Fit></div>
        <div className="w-[81px]"><Fit w={60}>-652.93mm</Fit></div>
        <div className="w-[70px]"><Fit w={55}>445.77mm</Fit></div>
        <div className="w-[48px]"><Fit w={28}>0mm</Fit></div>
        <div className="w-[151px]"><Fit w={133}>Completamente definido</Fit></div>
        <div className="w-[121px]"><Fit w={97}>Editando Croquis1</Fit></div>
        <Traffic w={8} h={14} />
        <Svg w={16} h={16} className="ml-[12px]"><path d="M1 16v-3M4 16v-3M7 16v-3M10 16v-5M13 16v-6" stroke="#2b77a0" strokeWidth="2" /><path d="M5.500 1l5 9h-10z" fill="#ffc52e" stroke="#7a4a0a" /><path d="M5.500 4v3M5.500 8v1" stroke="#222" /><path d="M8 11c3 0 4.500-2 4.500-6" stroke="#222" strokeWidth="1.800" /><path d="M12.500 1l3.500 4.500H9z" fill="#222" /></Svg>
        <div className="ml-[97px] w-[76px]"><Fit w={37}>MMGS</Fit></div>
        <Caret className="rotate-180" />
        <Svg w={17} h={16} className="ml-[27px]"><path d="M1 4l6-3 9 6v4l-6 4-9-6z" fill="#ddd" stroke="#444" strokeWidth="1.200" /><path d="M1 4l9 6 6-3M10 10v5" stroke="#444" /><ellipse cx="8.500" cy="5.500" rx="3" ry="1.800" stroke="#444" /></Svg>
      </div>
    </>
  );
}

/* ---------- taskbar ---------- */
const TaskIcon = ({ children, run }) => (
  <div className="relative flex h-full w-11 items-center justify-center">
    {children}
    {run && <div className="absolute bottom-[5px] h-[3px] w-[6px] rounded-full bg-[#a09a92]" />}
  </div>
);

function Taskbar() {
  return (
    <footer className={"flex h-12 w-full shrink-0 items-center bg-[linear-gradient(90deg,#2d2012_0,#2d2114_180px,#262524_270px,#272625_390px,#2b2316_470px,#2c2213_1440px)] text-white"}>
      <Svg w={26} h={24} className="ml-5">
        <defs><linearGradient id="cl" x2="0" y2="1"><stop stopColor="#eaf2ff" /><stop offset="1" stopColor="#8fb2ee" /></linearGradient></defs>
        <circle cx="17" cy="9" r="6.500" fill="#f79a1c" />
        <path d="M5 21a5 5 0 0 1 .5-9.500C7 6 15 6 16 12c5-2 8.500 1 8 5-.3 2.500-2 4-4 4z" fill="url(#cl)" />
      </Svg>
      <div className="ml-[5px] mt-[2px] flex w-[355px] flex-col text-[11.500px] leading-4">
        <Fit w={25} className="self-start">23°C</Fit>
        <Fit w={96} className="self-start text-[#bdb8b0]">Mayorm. nublado</Fit>
      </div>
      <div className="ml-[8px] grid h-[23px] w-[23px] grid-cols-2 gap-px">
        <div className="bg-[#66d8fb]" /><div className="bg-[#4fcbfa]" /><div className="bg-[#38bbf8]" /><div className="bg-[#1aa5f5]" />
      </div>
      <div className="ml-[14px] flex h-8 w-[100px] items-center rounded-full bg-[#3b3123] pl-[22px] text-[11.500px]">
        <Svg w={16} h={16}><circle cx="9.500" cy="6" r="4.800" stroke="#fff" strokeWidth="1.400" /><path d="M6 9.500L1 14.500" stroke="#fff" strokeWidth="1.600" /></Svg>
        <Fit w={35} className="ml-[4px]">Buscar</Fit>
      </div>
      <div className="ml-[3px] flex h-full">
        <TaskIcon><Svg w={24} h={24}><rect x="6" y="1" width="18" height="16" fill="#eee" /><rect x="0" y="7" width="18" height="15" fill="#777" opacity=".88" /></Svg></TaskIcon>
        <TaskIcon><Svg w={24} h={24}><path d="M1 22.500l1-6A11 11 0 1 1 12 23z" fill="#6a68cf" /><rect x="5" y="8" width="10" height="8.500" rx="1.500" fill="#fff" /><path d="M16 11l3.500-2.500v8L16 14z" fill="#fff" /></Svg></TaskIcon>
        <TaskIcon><div className="flex h-6 w-6 items-center justify-center bg-[#5b3c88] font-['Open_Sans',sans-serif] text-[13px] font-semibold"><span>JW</span></div></TaskIcon>
        <TaskIcon run><Svg w={22} h={26}><path d="M5 2.500h12l2 2.500 1.500 3-2.500 10-7 6-7-6L1.500 8 3 5z" fill="#fb4b22" /><path d="M5 5l6 1 6-1 1.500 4-3 4.500.5 2.500-5 4-5-4 .5-2.500L3.500 9z" fill="#fff" /><path d="M5.500 9l4 1M16.500 9l-4 1M11 10v4l-2 1.500M11 14l2 1.500M8 17.500l3 1.500 3-1.500" stroke="#fb4b22" strokeWidth="1.500" /></Svg></TaskIcon>
        <TaskIcon><Svg w={24} h={24}><path d="M0 1.500h8l2 3H0z" fill="#d49a13" /><rect y="4" width="24" height="18.500" rx="1" fill="#fcd05a" /><path d="M4 23v-5a2 2 0 0 1 2-2h12a2 2 0 0 1 2 2v5z" fill="#1a82c9" /></Svg></TaskIcon>
        <TaskIcon><Svg w={24} h={24}><rect x=".5" y=".5" width="23" height="23" rx="8" fill="#4a8cff" /><rect x="5" y="8" width="10" height="8.500" rx="2" fill="#fff" /><path d="M16 11l3.500-2.500v8L16 14z" fill="#fff" /></Svg></TaskIcon>
        <TaskIcon><Svg w={24} h={24}><path d="M7.500 6V1.500h9V6" stroke="#35b8ec" strokeWidth="1.700" /><path d="M.5 5h23v15a3 3 0 0 1-3 3h-17a3 3 0 0 1-3-3z" fill="#f4f4f4" /><path d="M7 9.500h4.500V14H7z" fill="#f25022" /><path d="M12.500 9.500H17V14h-4.500z" fill="#7fba00" /><path d="M7 15h4.500v4.500H7z" fill="#00a4ef" /><path d="M12.500 15H17v4.500h-4.500z" fill="#ffb900" /></Svg></TaskIcon>
        <TaskIcon><Svg w={24} h={24}><path d="M0 8l12-7 12 7v15H0z" fill="#0f62ae" /><path d="M1.500 8h21L12 17z" fill="#f4f4f4" /><path d="M0 8l12 8 12-8v15H0z" fill="#35b3ee" /><path d="M0 23l12-8 12 8z" fill="#1d91dc" /><path d="M3 8h18l-9 6.500z" fill="#f4f4f4" /></Svg></TaskIcon>
        <TaskIcon>
          <Svg w={24} h={24}>
            <defs><linearGradient id="ed"><stop stopColor="#168bd8" /><stop offset=".5" stopColor="#2dbbd6" /><stop offset="1" stopColor="#6bdc5c" /></linearGradient></defs>
            <circle cx="12" cy="12" r="12" fill="#1374c4" />
            <path d="M0 11C1 4 6 0 12 0c7 0 12 5 12 10 0 4-3 6-6 6-4 0-5-2-4-3 2-4-2-6-5-6-4 0-7 2-9 4z" fill="url(#ed)" />
            <path d="M9 10c-3 5 0 12 7 13 3-.8 5-2.500 6.500-5-5 2.500-11 1-12-3-.5-2 0-4 1-5z" fill="#0e4a93" />
            <path d="M14 15.500c2 1.700 7 1.500 10-1.500l-1 4c-3 1.500-8 1-9-2.500z" fill="#2c2213" />
          </Svg>
        </TaskIcon>
        <TaskIcon run>
          <Svg w={24} h={24}>
            <path d="M1 5l6-3.500h11L23 4v14l-8 4L1 19z" fill="#b21c22" /><path d="M1 5l6-3.500h11L23 4l-8 2.500z" fill="#e04a48" /><path d="M14.500 6.500V22" stroke="#7d1015" />
            <text x="2.500" y="16" fontSize="11" fontWeight="700" fill="#fff" className="font-['Liberation_Sans',sans-serif]">S</text>
            <text x="12.500" y="15" fontSize="11" fontWeight="700" fill="#fff" textLength="10" lengthAdjust="spacingAndGlyphs" className="font-['Liberation_Sans',sans-serif]">W</text>
            <text x="5" y="23.500" fontSize="8.500" fontWeight="700" fill="#fff" stroke="#222" strokeWidth="1.500" paintOrder="stroke" textLength="19" className="font-['Liberation_Sans',sans-serif]">2022</text>
          </Svg>
        </TaskIcon>
        <div className="relative ml-[2px] mt-1 flex h-[39px] w-10 items-center justify-center rounded bg-[#3d3427]">
          <Svg w={26} h={26} className="-mt-1"><rect x="2" y="2" width="18" height="19" rx="2" fill="#f5f5f5" /><path d="M5 14V5h12v3" stroke="#e05325" strokeWidth="2.400" strokeDasharray="3.500 1.200" /><path d="M8 16.500h10.500M17 6v13" stroke="#888" strokeWidth="2.200" /><circle cx="22.500" cy="15.500" r="2.300" stroke="#38a9e4" strokeWidth="1.800" /><circle cx="16.500" cy="22.500" r="2.300" stroke="#38a9e4" strokeWidth="1.800" /></Svg>
          <div className="absolute bottom-0 h-[3px] w-4 rounded-full bg-[#35d6f8]" />
        </div>
      </div>
      <Svg w={12} h={8} className="ml-[158px]"><path d="M.8 6.500L6 1.500l5.200 5" stroke="#fff" strokeWidth="1.300" /></Svg>
      <div className="ml-[14px] mt-[2px] flex w-7 flex-col items-center text-[11.500px] leading-4"><Fit w={20}>ESP</Fit><Fit w={22}>LAA</Fit></div>
      <Svg w={16} h={14} className="ml-4"><path d="M.8 5.500c4-4.700 10.400-4.700 14.400 0M3 8.300c3-3.300 7-3.300 10 0M5.300 10.500c1.700-1.800 3.700-1.800 5.400 0" stroke="#fff" strokeWidth="1.300" /><circle cx="8" cy="12" r="1.300" fill="#fff" /></Svg>
      <Svg w={17} h={14} className="ml-2"><path d="M1 5h2.500L7 1.500v11L3.500 9H1z" stroke="#fff" strokeWidth="1.100" /><path d="M9 5c1 1.200 1 2.800 0 4M11 3c2.200 2.400 2.200 5.600 0 8M13 1.200c3.300 3.400 3.300 8.200 0 11.600" stroke="#fff" strokeWidth="1.100" /></Svg>
      <Svg w={17} h={14} className="ml-[7px]"><path d="M6 3.500h8.500v8H3.500V9" stroke="#fff" strokeWidth="1.200" /><path d="M6.500 5.500h6v4h-6zM15 6h1.500v3H15z" fill="#fff" /><path d="M2 0v2M5 0v2" stroke="#fff" strokeWidth="1.200" /><path d="M.5 2h6v2.500L4.500 6.500V9h-2V6.500l-2-2z" fill="#fff" /></Svg>
      <div className="flex w-[68px] flex-col items-end text-[11.500px] leading-4"><Fit w={54}>10:17 a. m.</Fit><Fit w={49}>9/3/2023</Fit></div>
      <div className="ml-[7px] flex h-4 w-4 items-center justify-center rounded-full bg-[#35d6f8] text-[10px] text-[#222]">4</div>
    </footer>
  );
}

export default function App() {
  return (
    <div className={"flex h-[900px] w-[1440px] flex-col overflow-hidden bg-white text-black " + FONT}>
      <TitleBar />
      <Ribbon />
      <CommandTabs />
      <Workspace />
      <Footer />
      <Taskbar />
    </div>
  );
}
